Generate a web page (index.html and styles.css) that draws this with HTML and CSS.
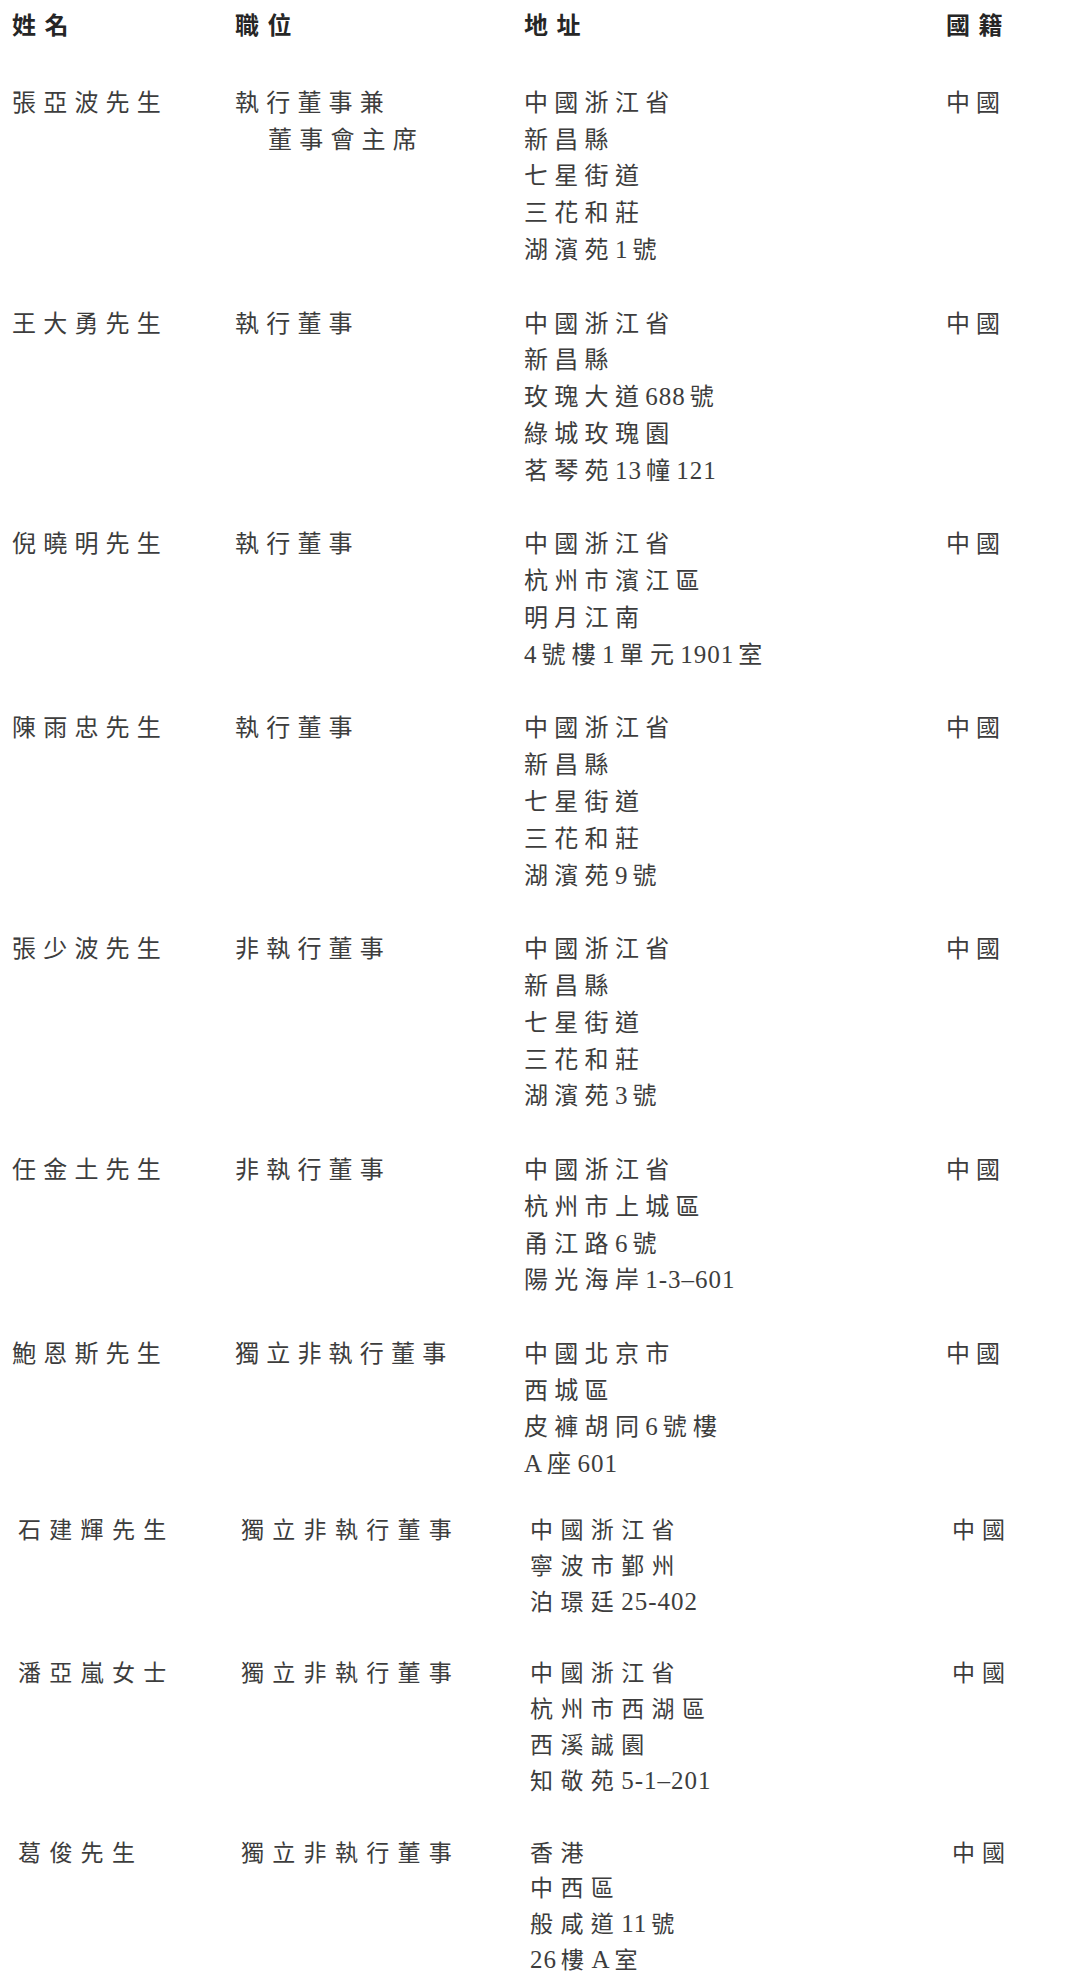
FILE: index.html
```html
<!DOCTYPE html>
<html lang="zh-Hant">
<head>
<meta charset="utf-8">
<title>董事名單</title>
<link rel="stylesheet" href="styles.css">
</head>
<body>
<main class="sheet">
  <div class="row head">
    <div class="cell">姓名</div>
    <div class="cell">職位</div>
    <div class="cell">地址</div>
    <div class="cell">國籍</div>
  </div>

  <section class="group group-a">
    <div class="row">
      <div class="cell name">張亞波先生</div>
      <div class="cell role">執行董事兼<span class="cont">董事會主席</span></div>
      <div class="cell addr"><span class="ln">中國浙江省</span><span class="ln">新昌縣</span><span class="ln">七星街道</span><span class="ln">三花和莊</span><span class="ln">湖濱苑<span class="n">1</span>號</span></div>
      <div class="cell nat">中國</div>
    </div>
    <div class="row">
      <div class="cell name">王大勇先生</div>
      <div class="cell role">執行董事</div>
      <div class="cell addr"><span class="ln">中國浙江省</span><span class="ln">新昌縣</span><span class="ln">玫瑰大道<span class="n">688</span>號</span><span class="ln">綠城玫瑰園</span><span class="ln">茗琴苑<span class="n">13</span>幢<span class="n">121</span></span></div>
      <div class="cell nat">中國</div>
    </div>
    <div class="row">
      <div class="cell name">倪曉明先生</div>
      <div class="cell role">執行董事</div>
      <div class="cell addr"><span class="ln">中國浙江省</span><span class="ln">杭州市濱江區</span><span class="ln">明月江南</span><span class="ln"><span class="n">4</span>號樓<span class="n">1</span>單元<span class="n">1901</span>室</span></div>
      <div class="cell nat">中國</div>
    </div>
    <div class="row">
      <div class="cell name">陳雨忠先生</div>
      <div class="cell role">執行董事</div>
      <div class="cell addr"><span class="ln">中國浙江省</span><span class="ln">新昌縣</span><span class="ln">七星街道</span><span class="ln">三花和莊</span><span class="ln">湖濱苑<span class="n">9</span>號</span></div>
      <div class="cell nat">中國</div>
    </div>
    <div class="row">
      <div class="cell name">張少波先生</div>
      <div class="cell role">非執行董事</div>
      <div class="cell addr"><span class="ln">中國浙江省</span><span class="ln">新昌縣</span><span class="ln">七星街道</span><span class="ln">三花和莊</span><span class="ln">湖濱苑<span class="n">3</span>號</span></div>
      <div class="cell nat">中國</div>
    </div>
    <div class="row">
      <div class="cell name">任金土先生</div>
      <div class="cell role">非執行董事</div>
      <div class="cell addr"><span class="ln">中國浙江省</span><span class="ln">杭州市上城區</span><span class="ln">甬江路<span class="n">6</span>號</span><span class="ln">陽光海岸<span class="n">1-3–601</span></span></div>
      <div class="cell nat">中國</div>
    </div>
    <div class="row">
      <div class="cell name">鮑恩斯先生</div>
      <div class="cell role">獨立非執行董事</div>
      <div class="cell addr"><span class="ln">中國北京市</span><span class="ln">西城區</span><span class="ln">皮褲胡同<span class="n">6</span>號樓</span><span class="ln"><span class="n">A</span>座<span class="n">601</span></span></div>
      <div class="cell nat">中國</div>
    </div>
  </section>

  <section class="group group-b">
    <div class="row">
      <div class="cell name">石建輝先生</div>
      <div class="cell role">獨立非執行董事</div>
      <div class="cell addr"><span class="ln">中國浙江省</span><span class="ln">寧波市鄞州</span><span class="ln">泊璟廷<span class="n">25-402</span></span></div>
      <div class="cell nat">中國</div>
    </div>
    <div class="row">
      <div class="cell name">潘亞嵐女士</div>
      <div class="cell role">獨立非執行董事</div>
      <div class="cell addr"><span class="ln">中國浙江省</span><span class="ln">杭州市西湖區</span><span class="ln">西溪誠園</span><span class="ln">知敬苑<span class="n">5-1–201</span></span></div>
      <div class="cell nat">中國</div>
    </div>
    <div class="row">
      <div class="cell name">葛俊先生</div>
      <div class="cell role">獨立非執行董事</div>
      <div class="cell addr"><span class="ln">香港</span><span class="ln">中西區</span><span class="ln">般咸道<span class="n">11</span>號</span><span class="ln"><span class="n">26</span>樓<span class="n">A</span>室</span></div>
      <div class="cell nat">中國</div>
    </div>
  </section>
</main>
</body>
</html>
```
FILE: styles.css
```css
html, body {
  margin: 0;
  padding: 0;
  background: #ffffff;
}

.sheet {
  padding: 6px 0 0 12px;
  font-family: "Noto Sans CJK TC", "Noto Sans CJK SC", sans-serif;
  font-size: 24px;
  color: #3d3d3d;
}

.row {
  display: grid;
  grid-template-columns: 223px 289px 422px auto;
  align-items: start;
}

.cell {
  white-space: nowrap;
}

.head {
  font-weight: 700;
  color: #262626;
  letter-spacing: 8.5px;
  line-height: 36.8px;
  margin-bottom: 40px;
}

.group-a {
  line-height: 36.8px;
}

.group-a .row + .row {
  margin-top: 36.8px;
}

.group-b {
  margin-top: 30px;
  padding-left: 6px;
  font-size: 23px;
  line-height: 35.8px;
}

.group-b .row + .row {
  margin-top: 36px;
}

.name,
.role {
  letter-spacing: 7.2px;
}

.group-b .name,
.group-b .role {
  letter-spacing: 8.3px;
}

.addr {
  letter-spacing: 6.3px;
}

.group-b .addr {
  letter-spacing: 7.4px;
}

.nat {
  letter-spacing: 6px;
}

.group-b .nat {
  letter-spacing: 7px;
}

.ln,
.cont {
  display: block;
}

.cont {
  padding-left: 33px;
}

.n {
  font-family: "Liberation Serif", serif;
  font-size: 25px;
  letter-spacing: 1px;
  margin-right: 4px;
  line-height: 0;
}
```
